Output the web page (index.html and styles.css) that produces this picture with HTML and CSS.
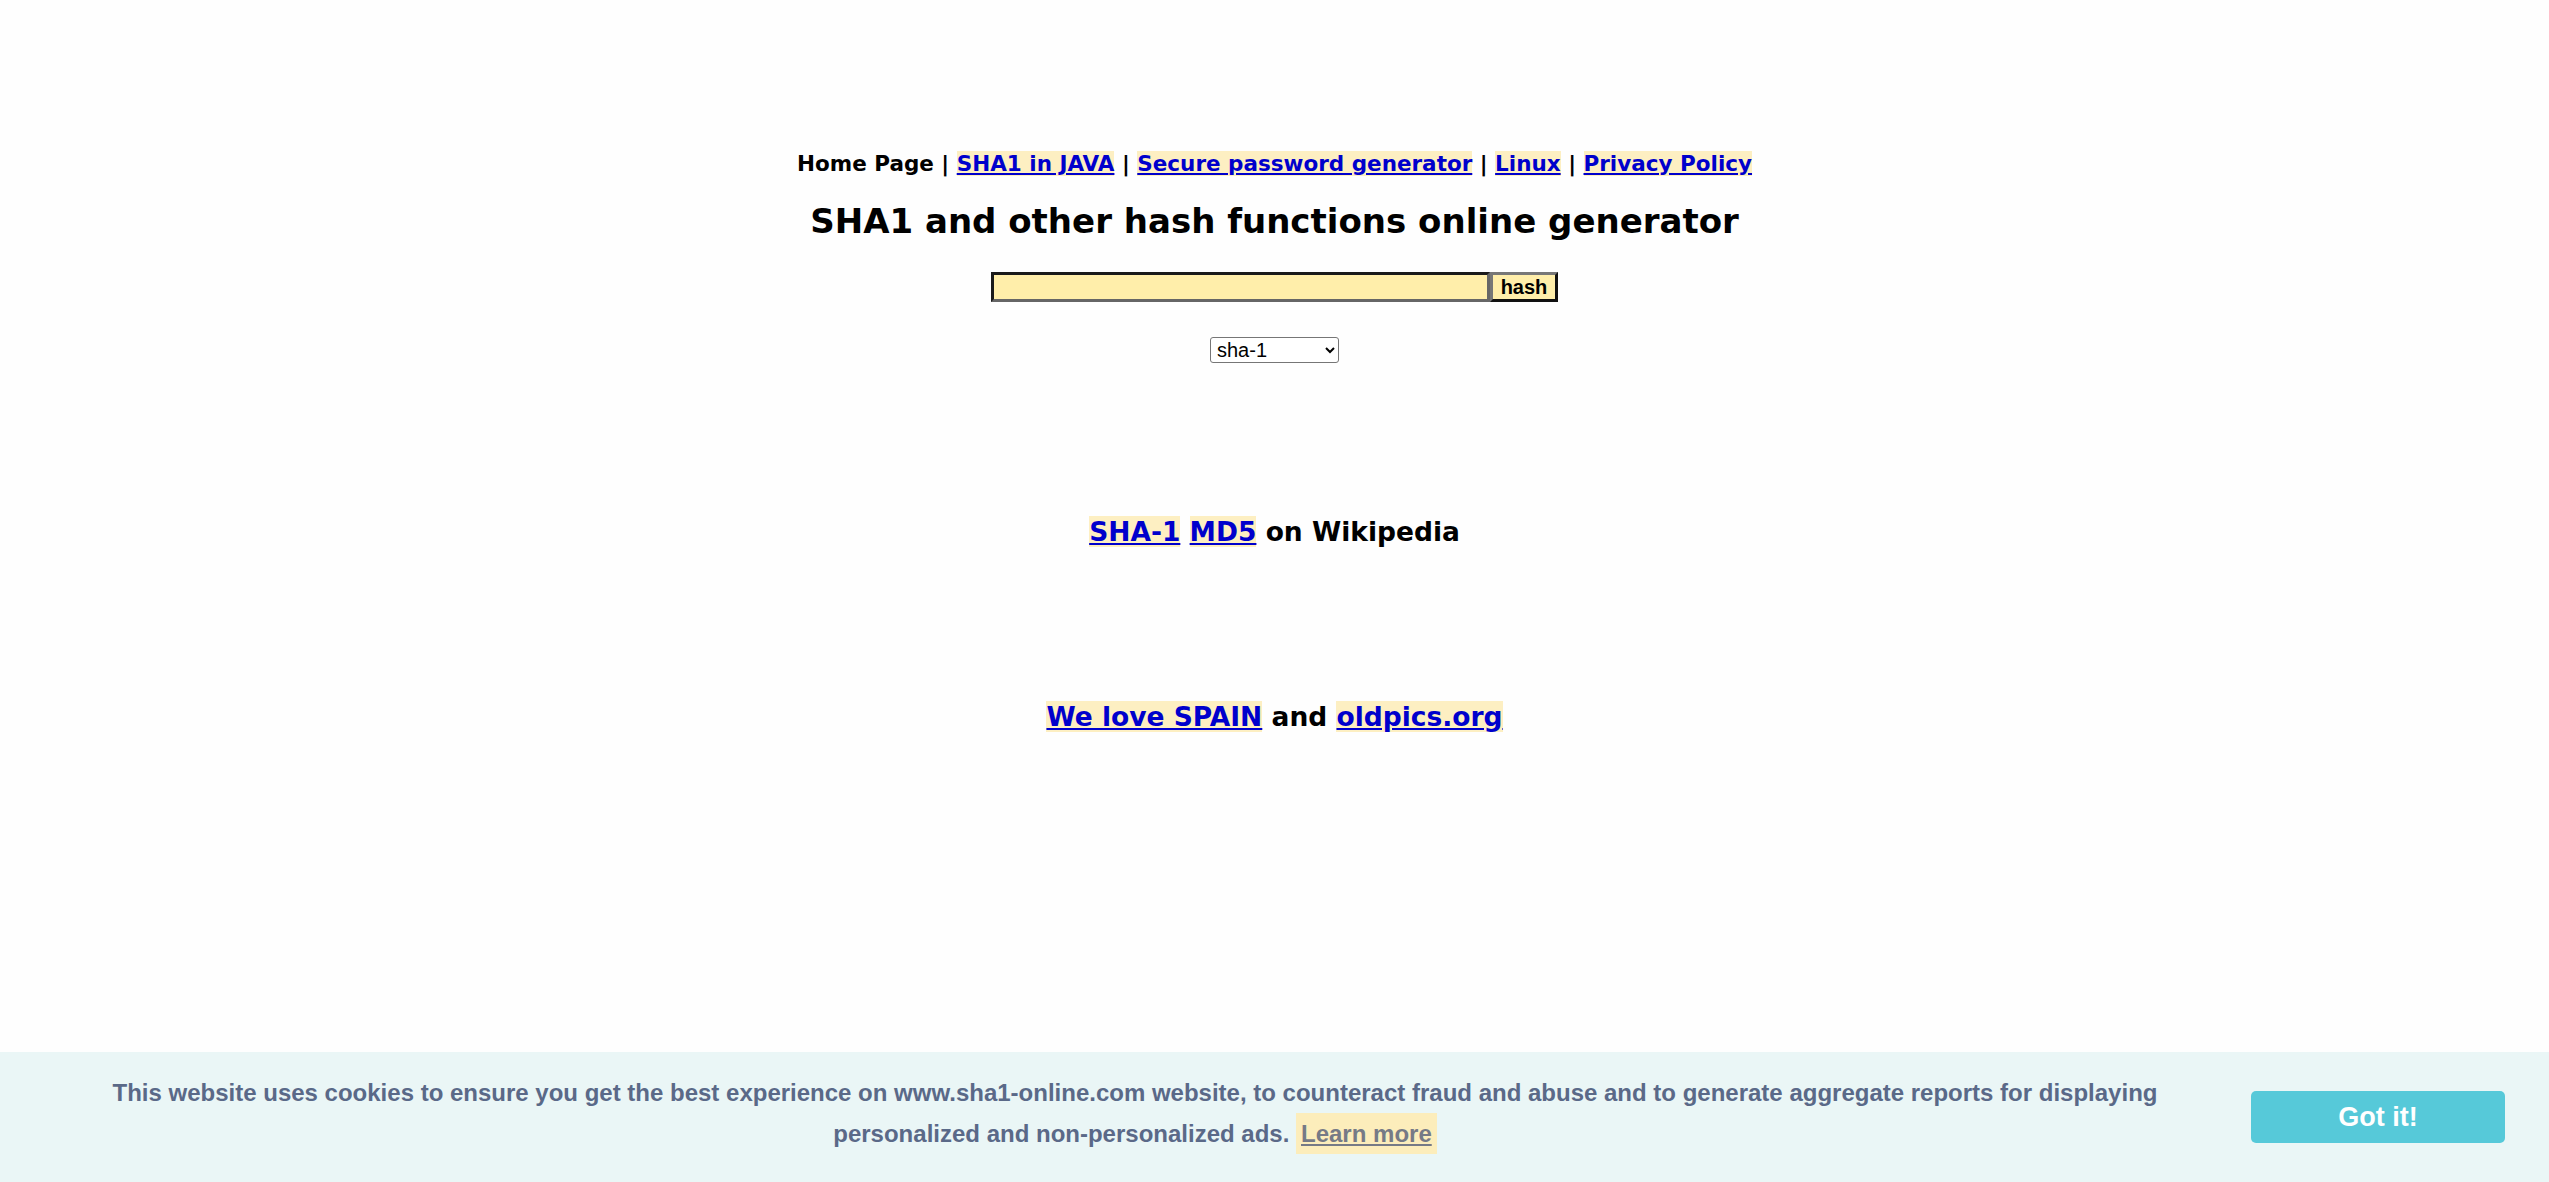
FILE: index.html
```html
<!DOCTYPE html>
<html lang="en">
<head>
<meta charset="utf-8">
<title>SHA1 online</title>
<link rel="stylesheet" href="styles.css">
</head>
<body>
<main class="page">
  <nav class="nav">
    <span class="plain">Home Page</span> | <a class="hl" href="#">SHA1 in JAVA</a> | <a class="hl" href="#">Secure password generator</a> | <a class="hl" href="#">Linux</a> | <a class="hl" href="#">Privacy Policy</a>
  </nav>
  <h1 class="title">SHA1 and other hash functions online generator</h1>
  <form class="hashform">
    <div class="row">
      <input class="field" type="text"><button class="hashbtn" type="button">hash</button>
    </div>
    <div class="selrow">
      <select class="algo"><option>sha-1</option><option>md5</option></select>
    </div>
  </form>
  <p class="big wiki"><a class="hl" href="#">SHA-1</a> <a class="hl" href="#">MD5</a> on Wikipedia</p>
  <p class="big spain"><a class="hl" href="#">We love SPAIN</a> and <a class="hl" href="#">oldpics.org</a></p>
</main>
<div class="cookie">
  <div class="cookie-text">This website uses cookies to ensure you get the best experience on www.sha1-online.com website, to counteract fraud and abuse and to generate aggregate reports for displaying<br>personalized and non-personalized ads. <a class="learn" href="#">Learn more</a></div>
  <a class="gotit" href="#">Got it!</a>
</div>
</body>
</html>
```
FILE: styles.css
```css
html, body {
  margin: 0;
  padding: 0;
  background: #fefefe;
}
body {
  font-family: "DejaVu Sans", Verdana, sans-serif;
  color: #000;
  height: 1182px;
  overflow: hidden;
}
.page {
  text-align: center;
  padding-top: 151px;
}
a.hl {
  color: #0000cc;
  background: #fdefc2;
  text-decoration: underline;
}
.nav {
  font-weight: bold;
  font-size: 21.5px;
  line-height: 26px;
}
.title {
  font-size: 34px;
  line-height: 40px;
  margin: 24px 0 0;
  font-weight: bold;
}
.hashform {
  margin: 31px 0 0;
}
.row {
  display: flex;
  justify-content: center;
}
.field {
  box-sizing: border-box;
  width: 499px;
  height: 30px;
  margin: 0;
  background: #ffeeaa;
  border: 3px solid;
  border-color: #1a1a1a #666 #666 #1a1a1a;
  padding: 0 4px;
  outline: none;
}
.hashbtn {
  box-sizing: border-box;
  width: 68px;
  height: 30px;
  margin: 0;
  background: #ffeeaa;
  border: 3px solid;
  border-color: #777 #111 #111 #777;
  font-family: "Liberation Sans", Arial, sans-serif;
  font-weight: bold;
  font-size: 20px;
  color: #000;
  padding: 0;
}
.selrow {
  margin-top: 35px;
  display: flex;
  justify-content: center;
}
.algo {
  box-sizing: border-box;
  width: 129px;
  height: 26px;
  font-family: "Liberation Sans", Arial, sans-serif;
  font-size: 20px;
  border: 1px solid #767676;
  border-radius: 3px;
  background: #fff;
  color: #000;
  padding: 0 2px;
}
.big {
  font-weight: bold;
  font-size: 26.5px;
  line-height: 32px;
  margin: 0;
}
.wiki {
  margin-top: 153px;
}
.spain {
  margin-top: 153px;
}
.cookie {
  position: fixed;
  left: 0;
  right: 0;
  bottom: 0;
  height: 130px;
  background: #eaf6f6;
  display: flex;
  align-items: center;
  font-family: "Liberation Sans", Arial, sans-serif;
  font-weight: bold;
}
.cookie-text {
  flex: 1;
  text-align: center;
  color: #5a6988;
  font-size: 24px;
  line-height: 41px;
  padding-left: 40px;
  margin-bottom: 8px;
}
.learn {
  display: inline-block;
  color: #767a86;
  background: #fcedbb;
  padding: 0 5px;
  text-decoration: underline;
}
.gotit {
  flex: none;
  width: 254px;
  height: 52px;
  margin: 0 44px 0 21px;
  background: #56c9d9;
  border-radius: 5px;
  color: #fff;
  font-size: 27px;
  text-decoration: none;
  display: flex;
  align-items: center;
  justify-content: center;
}
```
